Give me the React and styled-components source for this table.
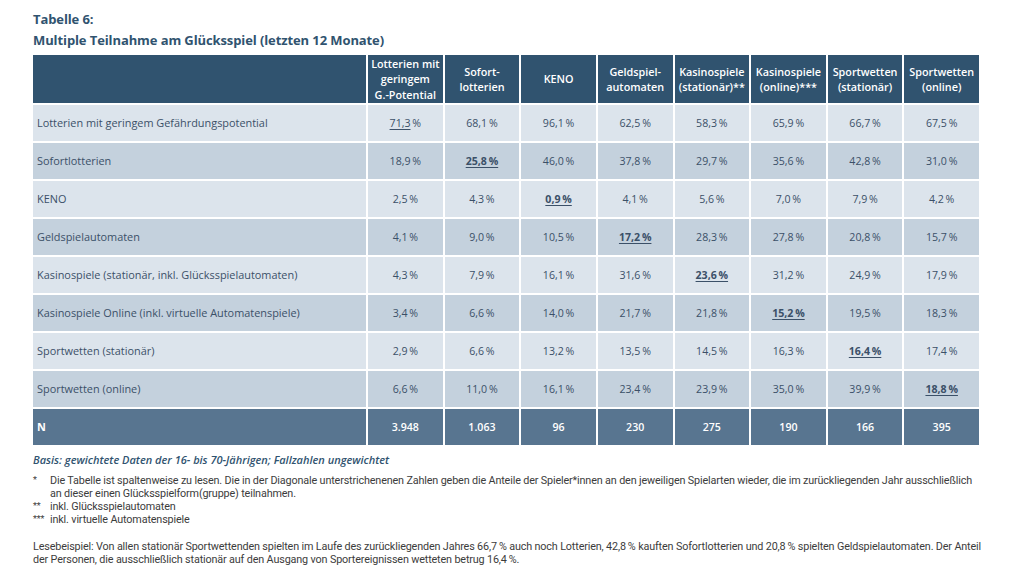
import React from 'react';
import styled, { createGlobalStyle } from 'styled-components';

const GlobalStyle = createGlobalStyle`
  html, body {
    margin: 0;
    padding: 0;
    background: #ffffff;
  }
  body {
    font-family: "Open Sans", "Noto Sans", sans-serif;
  }
`;

const COLORS = {
  head: '#30536f',
  light: '#dce4ec',
  dark: '#c4d1dd',
  total: '#587590',
  text: '#3b5068',
  note: '#3c3c3c',
};

const Page = styled.div`
  width: 1024px;
  height: 586px;
  box-sizing: border-box;
  padding: 9px 45px 0 33px;
  overflow: hidden;
`;

const Title = styled.h1`
  margin: 0;
  font-size: 13px;
  line-height: 21px;
  font-weight: 700;
  color: ${COLORS.head};
  letter-spacing: -0.1px;
`;

const Grid = styled.div`
  margin-top: 4px;
  width: 946px;
  display: grid;
  grid-template-columns: 333px repeat(8, 1fr);
  grid-template-rows: 48px repeat(9, 36.5px);
  gap: 1.5px 2px;
  background: #ffffff;
`;

const HeadCell = styled.div`
  background: ${COLORS.head};
  color: #ffffff;
  font-size: 10.8px;
  font-weight: 600;
  line-height: 15.5px;
  display: flex;
  align-items: center;
  justify-content: center;
  text-align: center;
  white-space: pre-line;
`;

const LabelCell = styled.div`
  background: ${(p) => (p.$total ? COLORS.total : p.$dark ? COLORS.dark : COLORS.light)};
  color: ${(p) => (p.$total ? '#ffffff' : COLORS.text)};
  font-size: 10.9px;
  font-weight: ${(p) => (p.$total ? 700 : 400)};
  display: flex;
  align-items: center;
  padding-left: 4px;
`;

const ValueCell = styled(LabelCell)`
  justify-content: center;
  padding-left: 0;
  font-size: 10.6px;
  font-weight: ${(p) => (p.$total ? 600 : 400)};
`;

const Diag = styled.span`
  font-weight: ${(p) => (p.$thin ? 400 : 700)};
  text-decoration: underline;
  text-underline-offset: 2px;
`;

const Basis = styled.p`
  margin: 7px 0 0;
  font-size: 11px;
  font-style: italic;
  font-weight: 600;
  color: ${COLORS.head};
`;

const Notes = styled.div`
  margin-top: 7px;
  display: grid;
  grid-template-columns: 17px 1fr;
  font-family: "Roboto", "Liberation Sans", sans-serif;
  font-size: 10.8px;
  line-height: 13px;
  color: ${COLORS.note};
  letter-spacing: -0.15px;
  white-space: nowrap;
`;

const Mark = styled.span`
  font-size: 9px;
`;

const Example = styled.p`
  margin: 14px 0 0;
  font-family: "Roboto", "Liberation Sans", sans-serif;
  font-size: 10.8px;
  line-height: 13px;
  color: ${COLORS.note};
  letter-spacing: -0.15px;
  white-space: nowrap;
`;

const headers = [
  'Lotterien mit\ngeringem\nG.-Potential',
  'Sofort-\nlotterien',
  'KENO',
  'Geldspiel-\nautomaten',
  'Kasinospiele\n(stationär)**',
  'Kasinospiele\n(online)***',
  'Sportwetten\n(stationär)',
  'Sportwetten\n(online)',
];

const rows = [
  ['Lotterien mit geringem Gefährdungspotential', ['71,3', '68,1', '96,1', '62,5', '58,3', '65,9', '66,7', '67,5']],
  ['Sofortlotterien', ['18,9', '25,8', '46,0', '37,8', '29,7', '35,6', '42,8', '31,0']],
  ['KENO', ['2,5', '4,3', '0,9', '4,1', '5,6', '7,0', '7,9', '4,2']],
  ['Geldspielautomaten', ['4,1', '9,0', '10,5', '17,2', '28,3', '27,8', '20,8', '15,7']],
  ['Kasinospiele (stationär, inkl. Glücksspielautomaten)', ['4,3', '7,9', '16,1', '31,6', '23,6', '31,2', '24,9', '17,9']],
  ['Kasinospiele Online (inkl. virtuelle Automatenspiele)', ['3,4', '6,6', '14,0', '21,7', '21,8', '15,2', '19,5', '18,3']],
  ['Sportwetten (stationär)', ['2,9', '6,6', '13,2', '13,5', '14,5', '16,3', '16,4', '17,4']],
  ['Sportwetten (online)', ['6,6', '11,0', '16,1', '23,4', '23,9', '35,0', '39,9', '18,8']],
];

const totals = ['3.948', '1.063', '96', '230', '275', '190', '166', '395'];

const renderValue = (v, i, r) => {
  if (i !== r) return `${v}\u2009%`;
  if (r === 0) {
    return (
      <>
        <Diag $thin>{v}</Diag>{'\u2009%'}
      </>
    );
  }
  return <Diag>{`${v}\u2009%`}</Diag>;
};

export default function App() {
  return (
    <Page>
      <GlobalStyle />
      <Title>Tabelle 6:</Title>
      <Title>Multiple Teilnahme am Glücksspiel (letzten 12 Monate)</Title>
      <Grid>
        <HeadCell />
        {headers.map((h) => (
          <HeadCell key={h}>{h}</HeadCell>
        ))}
        {rows.map(([label, values], r) => (
          <React.Fragment key={label}>
            <LabelCell $dark={r % 2 === 1}>{label}</LabelCell>
            {values.map((v, i) => (
              <ValueCell key={i} $dark={r % 2 === 1}>
                {renderValue(v, i, r)}
              </ValueCell>
            ))}
          </React.Fragment>
        ))}
        <LabelCell $total>N</LabelCell>
        {totals.map((t) => (
          <ValueCell key={t} $total>
            {t}
          </ValueCell>
        ))}
      </Grid>
      <Basis>Basis: gewichtete Daten der 16- bis 70-Jährigen; Fallzahlen ungewichtet</Basis>
      <Notes>
        <Mark>*</Mark>
        <span>
          Die Tabelle ist spaltenweise zu lesen. Die in der Diagonale unterstrichenenen Zahlen geben die Anteile der
          Spieler*innen an den jeweiligen Spielarten wieder, die im zurückliegenden Jahr ausschließlich
          <br />
          an dieser einen Glücksspielform(gruppe) teilnahmen.
        </span>
        <Mark>**</Mark>
        <span>inkl. Glücksspielautomaten</span>
        <Mark>***</Mark>
        <span>inkl. virtuelle Automatenspiele</span>
      </Notes>
      <Example>
        Lesebeispiel: Von allen stationär Sportwettenden spielten im Laufe des zurückliegenden Jahres 66,7&#8201;% auch
        noch Lotterien, 42,8&#8201;% kauften Sofortlotterien und 20,8&#8201;% spielten Geldspielautomaten. Der Anteil
        <br />
        der Personen, die ausschließlich stationär auf den Ausgang von Sportereignissen wetteten betrug 16,4&#8201;%.
      </Example>
    </Page>
  );
}
